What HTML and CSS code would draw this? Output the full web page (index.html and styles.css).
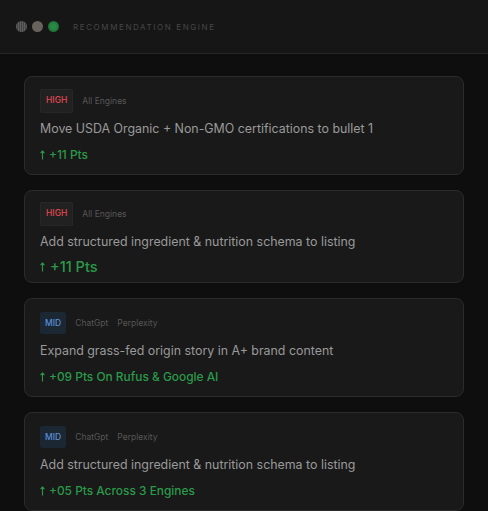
FILE: index.html
```html
<!DOCTYPE html>
<html lang="en">
<head>
    <meta charset="UTF-8">
    <title>Recommendation Engine</title>
    <link rel="stylesheet" href="styles.css">
</head>
<body>
<div class="topbar">
    <div class="dots">
        <span class="dot dot_gray"></span>
        <span class="dot dot_brown"></span>
        <span class="dot dot_green"></span>
    </div>
    <div class="topbar_title">Recommendation Engine</div>
</div>

<div class="list">
    <div class="card">
        <div class="tags">
            <span class="badge badge_high">HIGH</span>
            <span class="engine">All Engines</span>
        </div>
        <div class="rec">Move USDA Organic + Non-GMO certifications to bullet 1</div>
        <div class="pts"><svg class="arrow" viewBox="0 0 5 10"><path d="M2.5 9.5V1M0.6 3L2.5 1L4.4 3"/></svg>+11 Pts</div>
    </div>

    <div class="card card_tight">
        <div class="tags">
            <span class="badge badge_high">HIGH</span>
            <span class="engine">All Engines</span>
        </div>
        <div class="rec">Add structured ingredient &amp; nutrition schema to listing</div>
        <div class="pts pts_big"><svg class="arrow" viewBox="0 0 5 10"><path d="M2.5 9.5V1M0.6 3L2.5 1L4.4 3"/></svg>+11 Pts</div>
    </div>

    <div class="card">
        <div class="tags">
            <span class="badge badge_mid">MID</span>
            <span class="engine">ChatGpt</span>
            <span class="engine">Perplexity</span>
        </div>
        <div class="rec">Expand grass-fed origin story in A+ brand content</div>
        <div class="pts"><svg class="arrow" viewBox="0 0 5 10"><path d="M2.5 9.5V1M0.6 3L2.5 1L4.4 3"/></svg>+09 Pts On Rufus &amp; Google AI</div>
    </div>

    <div class="card">
        <div class="tags">
            <span class="badge badge_mid">MID</span>
            <span class="engine">ChatGpt</span>
            <span class="engine">Perplexity</span>
        </div>
        <div class="rec">Add structured ingredient &amp; nutrition schema to listing</div>
        <div class="pts"><svg class="arrow" viewBox="0 0 5 10"><path d="M2.5 9.5V1M0.6 3L2.5 1L4.4 3"/></svg>+05 Pts Across 3 Engines</div>
    </div>
</div>
</body>
</html>
```

FILE: styles.css
```css
body {
    margin: 0;
    background-color: #0e0e0e;
    font-family: Inter, "Liberation Sans", sans-serif;
    overflow: hidden;
}

.topbar {
    height: 54px;
    display: flex;
    align-items: center;
    padding: 0 16px;
    background-color: #161616;
    border-bottom: 1px solid #252525;
    box-sizing: border-box;
}

.dots {
    display: flex;
    gap: 5px;
}

.dot {
    width: 11px;
    height: 11px;
    border-radius: 50%;
}

.dot_gray {
    background: repeating-linear-gradient(90deg, #5e5e5e 0, #5e5e5e 1px, #444 1px, #444 2px);
}

.dot_brown {
    background-color: #68625c;
}

.dot_green {
    background: radial-gradient(circle, #2a8a45 30%, #1d6e35 70%);
}

.topbar_title {
    margin-left: 14px;
    font-size: 8px;
    letter-spacing: 1.6px;
    text-transform: uppercase;
    color: #464646;
}

.list {
    display: flex;
    flex-direction: column;
    gap: 15px;
    padding: 22px 24px 0;
}

.card {
    background-color: #191919;
    border: 1px solid #2b2b2b;
    border-radius: 8px;
    padding: 12px 15px 9px;
}

.card_tight {
    padding: 11px 15px 5px;
}

.tags {
    display: flex;
    align-items: center;
    gap: 9px;
    height: 23px;
}

.badge {
    font-size: 8.5px;
    font-weight: 500;
    height: 22px;
    line-height: 22px;
    padding: 0 5px;
    border-radius: 2px;
}

.badge_high {
    color: #e04850;
    background-color: #212121;
    border: 1px dotted #2e2e2e;
    line-height: 20px;
}

.badge_mid {
    color: #5b8fd6;
    background-color: #1b2733;
}

.engine {
    font-size: 8.5px;
    color: #575757;
}

.rec {
    margin-top: 7px;
    font-size: 12.4px;
    line-height: 20px;
    color: #9a9a9a;
}

.pts {
    display: flex;
    align-items: center;
    margin-top: 6px;
    font-size: 11.9px;
    line-height: 20px;
    font-weight: 500;
    color: #2a9a4a;
}

.arrow {
    width: 5px;
    height: 10px;
    margin-right: 4px;
    fill: none;
    stroke: #2a9a4a;
    stroke-width: 1.1;
}

.pts_big {
    margin-top: 5px;
    font-size: 14.5px;
}

.pts_big .arrow {
    height: 12px;
    margin-right: 5px;
}
```
